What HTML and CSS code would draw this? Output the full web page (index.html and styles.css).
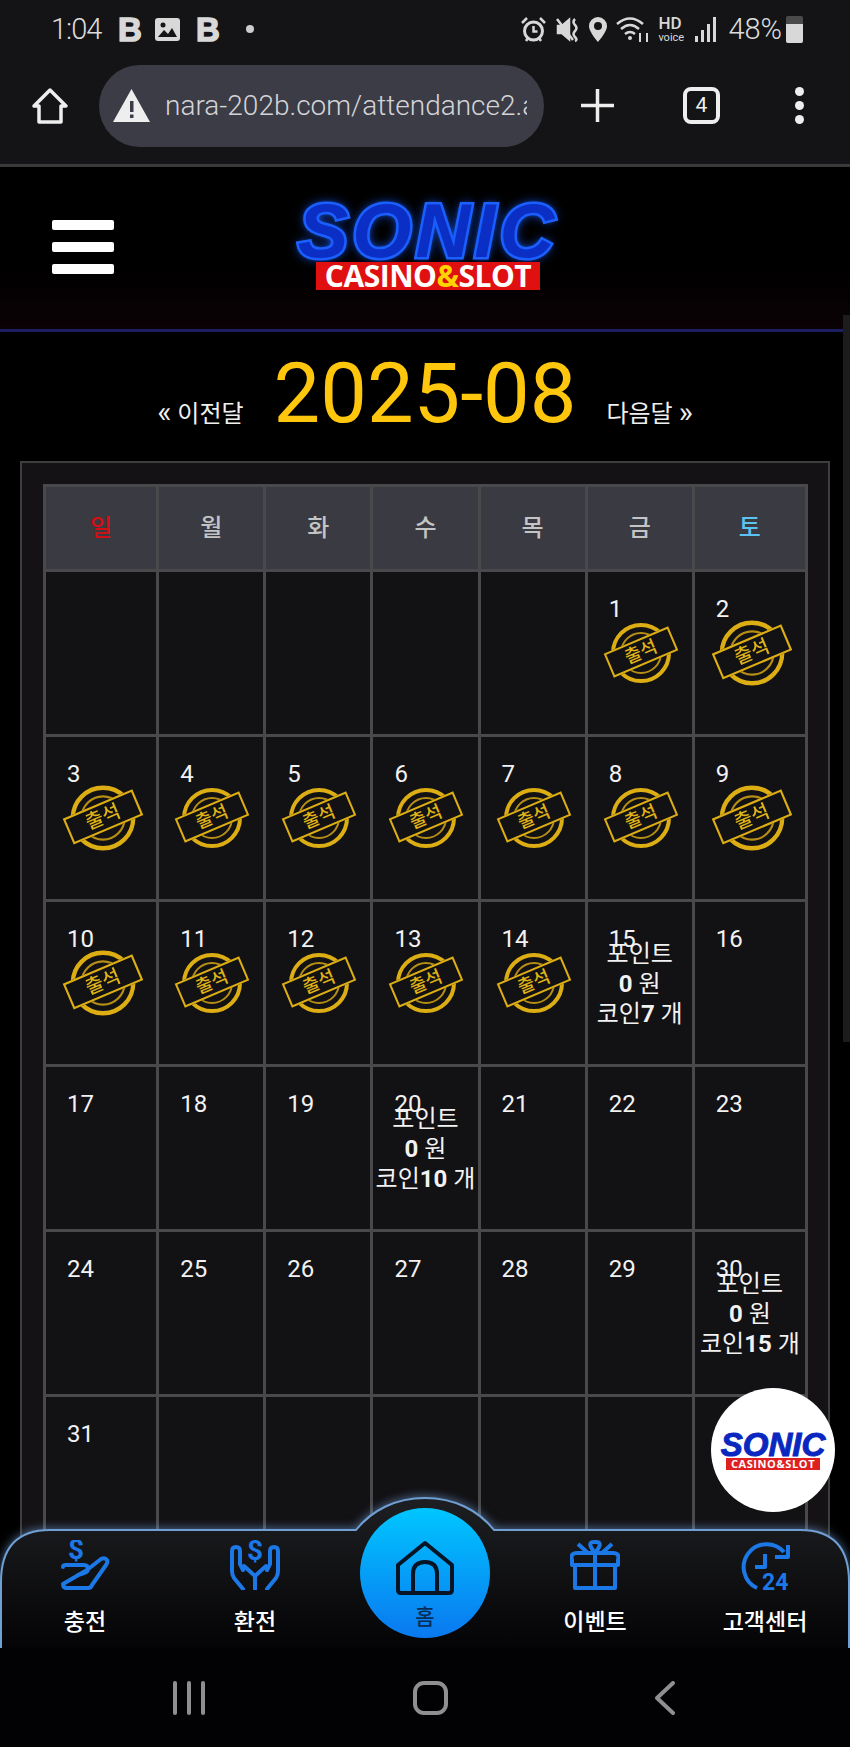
FILE: index.html
```html
<!DOCTYPE html>
<html lang="ko">
<head>
    <meta charset="UTF-8">
    <meta name="viewport" content="width=device-width, initial-scale=1.0">
    <title>출석체크</title>
    <link rel="stylesheet" href="styles.css">
</head>
<body>
<div class="screen">
    <!-- phone status bar -->
    <div class="status-bar">
        <div class="status-left">
            <span class="time">1:04</span>
            <span class="b-icon">B</span>
            <svg class="st-img" width="25" height="23" viewBox="0 0 25 23"><rect width="25" height="23" rx="3" fill="#d8d8d8"/><circle cx="8" cy="7" r="2.5" fill="#141416"/><path d="M3 19l6-7 4 4 4-6 5 9z" fill="#141416"/></svg>
            <span class="b-icon b-second">B</span>
            <span class="st-dot"></span>
        </div>
        <div class="status-right">
            <svg width="27" height="27" viewBox="0 0 27 27" fill="none" stroke="#d8d8d8"><circle cx="13.500" cy="15" r="9" stroke-width="3"/><path d="M13.500 10v5.500h4M2 7l5-5M25 7l-5-5M6 25l2-3M21 25l-2-3" stroke-width="2.500"/></svg>
            <svg width="24" height="27" viewBox="0 0 24 27" fill="none" stroke="#d8d8d8" stroke-width="2.500"><path d="M2 10h4l7-6v19l-7-6H2z" fill="#d8d8d8"/><path d="M19 3q-3 3 0 6t0 6 0 6 0 4M1 3l16 21"/></svg>
            <svg width="18" height="25" viewBox="0 0 18 25"><path fill-rule="evenodd" d="M9 0a9 9 0 0 1 9 9c0 6-9 16-9 16S0 15 0 9a9 9 0 0 1 9-9zm0 5a4 4 0 1 0 0 8 4 4 0 0 0 0-8z" fill="#d8d8d8"/></svg>
            <svg width="33" height="27" viewBox="0 0 33 27" fill="none" stroke="#d8d8d8" stroke-width="2.500"><path d="M1 8q13-11 26 0M5 13q9-8 18 0M9 18q5-4 10 0"/><circle cx="14" cy="22" r="2" fill="#d8d8d8" stroke="none"/><path d="M24 17v9M31 26v-9" stroke-width="2"/></svg>
            <span class="hd"><b>HD</b><i>voice</i></span>
            <svg width="22" height="25" viewBox="0 0 22 25" fill="#d8d8d8"><rect x="0" y="19" width="3" height="6"/><rect x="6" y="13" width="3" height="12"/><rect x="12" y="7" width="3" height="18"/><rect x="18" y="0" width="3" height="25"/></svg>
            <span class="battery-text">48%</span>
            <span class="battery"><span class="battery-fill"></span></span>
        </div>
    </div>

    <!-- browser toolbar -->
    <div class="toolbar">
        <svg class="tb-home" width="38" height="38" viewBox="0 0 38 38" fill="none" stroke="#eee" stroke-width="3.500" stroke-linejoin="round"><path d="M19 3L3 19h5v16h22V19h5z"/></svg>
        <div class="url-bar">
            <svg width="37" height="33" viewBox="0 0 37 33"><path fill-rule="evenodd" d="M18.500 0L37 33H0zM17 12v11h3.500V12zm0 13.500V29h3.500v-3.500z" fill="#eee"/></svg>
            <span class="url-text">nara-202b.com/attendance2.asp</span>
        </div>
        <svg class="tb-plus" width="33" height="33" viewBox="0 0 33 33" stroke="#eee" stroke-width="3.500"><path d="M16.500 0v33M0 16.500h33"/></svg>
        <span class="tab-count">4</span>
        <span class="tb-dots"><i></i><i></i><i></i></span>
    </div>

    <!-- site header -->
    <header class="site-header">
        <div class="hamburger"><span></span><span></span><span></span></div>
        <div class="logo">
            <div class="logo-name">SONIC</div>
            <div class="logo-band">CASINO<em>&amp;</em>SLOT</div>
        </div>
    </header>

    <div class="month-nav">
        <a class="month-link"><span class="month-arrow">«</span> 이전달</a>
        <span class="month-title">2025-08</span>
        <a class="month-link">다음달 <span class="month-arrow">»</span></a>
    </div>

    <div class="calendar-box">
        <table class="calendar">
            <thead>
                <tr>
                    <th class="wide sun">일</th>
                    <th>월</th>
                    <th>화</th>
                    <th>수</th>
                    <th>목</th>
                    <th>금</th>
                    <th class="wide sat">토</th>
                </tr>
            </thead>
            <tbody>
                <tr>
                    <td></td><td></td><td></td><td></td><td></td>
                    <td><div class="day">1</div><div class="stamp"><span>출석</span></div></td>
                    <td class="big"><div class="day">2</div><div class="stamp"><span>출석</span></div></td>
                </tr>
                <tr>
                    <td class="big"><div class="day">3</div><div class="stamp"><span>출석</span></div></td>
                    <td><div class="day">4</div><div class="stamp"><span>출석</span></div></td>
                    <td><div class="day">5</div><div class="stamp"><span>출석</span></div></td>
                    <td><div class="day">6</div><div class="stamp"><span>출석</span></div></td>
                    <td><div class="day">7</div><div class="stamp"><span>출석</span></div></td>
                    <td><div class="day">8</div><div class="stamp"><span>출석</span></div></td>
                    <td class="big"><div class="day">9</div><div class="stamp"><span>출석</span></div></td>
                </tr>
                <tr>
                    <td class="big"><div class="day">10</div><div class="stamp"><span>출석</span></div></td>
                    <td><div class="day">11</div><div class="stamp"><span>출석</span></div></td>
                    <td><div class="day">12</div><div class="stamp"><span>출석</span></div></td>
                    <td><div class="day">13</div><div class="stamp"><span>출석</span></div></td>
                    <td><div class="day">14</div><div class="stamp"><span>출석</span></div></td>
                    <td><div class="day has-prize">15</div><div class="prize">포인트<br><b>0</b> 원<br>코인<b>7</b> 개</div></td>
                    <td><div class="day">16</div></td>
                </tr>
                <tr>
                    <td><div class="day">17</div></td>
                    <td><div class="day">18</div></td>
                    <td><div class="day">19</div></td>
                    <td><div class="day has-prize">20</div><div class="prize">포인트<br><b>0</b> 원<br>코인<b>10</b> 개</div></td>
                    <td><div class="day">21</div></td>
                    <td><div class="day">22</div></td>
                    <td><div class="day">23</div></td>
                </tr>
                <tr>
                    <td><div class="day">24</div></td>
                    <td><div class="day">25</div></td>
                    <td><div class="day">26</div></td>
                    <td><div class="day">27</div></td>
                    <td><div class="day">28</div></td>
                    <td><div class="day">29</div></td>
                    <td><div class="day has-prize">30</div><div class="prize">포인트<br><b>0</b> 원<br>코인<b>15</b> 개</div></td>
                </tr>
                <tr>
                    <td><div class="day">31</div></td>
                    <td></td><td></td><td></td><td></td><td></td><td></td>
                </tr>
            </tbody>
        </table>
    </div>

    <div class="scrollbar"></div>

    <!-- floating logo button -->
    <div class="float-logo">
        <div class="float-name">SONIC</div>
        <div class="float-band">CASINO&amp;SLOT</div>
    </div>

    <!-- bottom dock -->
    <div class="dock">
        <nav class="bottom-nav">
            <svg class="nav-shape" width="850" height="154" viewBox="0 0 850 154">
                <defs>
                    <linearGradient id="navfill" x1="0" y1="0" x2="0" y2="1">
                        <stop offset="0" stop-color="#1e1f22"/>
                        <stop offset="1" stop-color="#040406"/>
                    </linearGradient>
                </defs>
                <path d="M1 154V88Q1 36 50 36H356C372 16 396 4 425 4S478 16 494 36H800Q849 36 849 88V154" fill="url(#navfill)" stroke="#6f9fd4" stroke-width="2"/>
            </svg>
            <a class="nav-item">
                <svg width="50" height="50" viewBox="0 0 50 50" fill="none" stroke="#1c78e6" stroke-width="4" stroke-linecap="round" stroke-linejoin="round"><path d="M3 27Q3 25 6 25H24Q28 25 28 29Q28 32 24 33L18 35M27 30L41 19Q45 17 47 20Q48 22 46 25L32 45Q31 48 28 48H7Q3 48 3 44Z"/><text class="nav-dollar" x="8" y="19">$</text></svg>
                <span>충전</span>
            </a>
            <a class="nav-item">
                <svg width="50" height="50" viewBox="0 0 50 50" fill="none" stroke="#1c78e6" stroke-width="4" stroke-linecap="round" stroke-linejoin="round"><path d="M13 49L4 38Q2 35 2 31V11Q2 7 6 7Q10 7 10 11V24L13 30"/><path d="M37 49L46 38Q48 35 48 31V11Q48 7 44 7Q40 7 40 11V24L37 30"/><path d="M25 49V36L14 26M25 36L36 26"/><text class="nav-dollar" x="25" y="20" text-anchor="middle">$</text></svg>
                <span>환전</span>
            </a>
            <a class="nav-item nav-home">
                <svg width="60" height="56" viewBox="0 0 60 56" fill="none" stroke="#061426" stroke-width="4" stroke-linejoin="round"><path d="M30 3L3 25V50Q3 53 6 53H54Q57 53 57 50V25Z"/><path d="M18 53V34Q18 22 30 22Q42 22 42 34V53"/></svg>
                <span>홈</span>
            </a>
            <a class="nav-item">
                <svg width="50" height="50" viewBox="0 0 50 50" fill="none" stroke="#1c78e6" stroke-width="4" stroke-linejoin="round"><path d="M7 13Q0 13 2 20V25H48V20Q50 13 43 13ZM5 25V48H45V25M25 13V48"/><path d="M25 13Q16 2 24 2H26Q34 2 25 13ZM8 4L18 13M42 4L32 13"/></svg>
                <span>이벤트</span>
            </a>
            <a class="nav-item">
                <svg width="50" height="50" viewBox="0 0 50 50" fill="none" stroke="#1c78e6" stroke-width="4" stroke-linejoin="round"><path d="M44 12A23 23 0 1 0 17 48"/><path d="M48 5V17H35M25 14V27H15"/><text class="nav-24" x="22" y="50">24</text></svg>
                <span>고객센터</span>
            </a>
        </nav>
        <div class="sys-nav">
            <svg width="32" height="34" viewBox="0 0 32 34" fill="#8f8f91"><rect x="0" width="4" height="34" rx="2"/><rect x="14" width="4" height="34" rx="2"/><rect x="28" width="4" height="34" rx="2"/></svg>
            <span class="sys-home"></span>
            <svg width="20" height="34" viewBox="0 0 20 34" fill="none" stroke="#8f8f91" stroke-width="4" stroke-linecap="round" stroke-linejoin="round"><path d="M18 2L2 17l16 15"/></svg>
        </div>
    </div>
</div>
</body>
</html>
```

FILE: styles.css
```css
* {
    box-sizing: border-box;
}
body {
    margin: 0;
    background-color: #000;
    color: #fff;
    font-family: Roboto, "Noto Sans CJK KR", sans-serif;
}
.screen {
    position: relative;
    width: 850px;
    height: 1747px;
    overflow: hidden;
    background-color: #000;
}

/* status bar */
.status-bar {
    height: 50px;
    padding: 8px 47px 0 51px;
    background-color: #141416;
    display: flex;
    justify-content: space-between;
    align-items: center;
}
.status-left,
.status-right {
    display: flex;
    align-items: center;
}
.status-left {
    gap: 16px;
}
.status-right {
    gap: 9px;
}
.time {
    font-size: 29px;
    font-weight: 300;
    letter-spacing: -1px;
    color: #ddd;
    width: 51px;
}
.b-icon {
    width: 21px;
    font: bold 33px/1 "Liberation Sans", sans-serif;
    color: #d8d8d8;
    -webkit-text-stroke: 1.5px #d8d8d8;
}
.b-second {
    margin-right: 13px;
}
.st-dot {
    width: 8px;
    height: 8px;
    border-radius: 50%;
    background-color: #ccc;
}
.hd {
    display: flex;
    flex-direction: column;
    line-height: 1;
    color: #d8d8d8;
    width: 28px;
}
.hd b {
    font-size: 17px;
    font-weight: 500;
}
.hd i {
    font-size: 11px;
    font-style: normal;
}
.battery-text {
    font-size: 29px;
    font-weight: 300;
    color: #ddd;
    margin-left: 2px;
}
.battery {
    display: block;
    width: 17px;
    height: 27px;
    margin-left: -5px;
    background-color: #4a4a4a;
    border-radius: 2px;
    position: relative;
}
.battery-fill {
    display: block;
    position: absolute;
    left: 0;
    right: 0;
    bottom: 0;
    height: 19px;
    background-color: #d8d8d8;
    border-radius: 0 0 2px 2px;
}

/* browser toolbar */
.toolbar {
    height: 117px;
    padding: 16px 0 19px 0;
    background-color: #141416;
    border-bottom: 3px solid #3a3a3a;
    display: flex;
    align-items: center;
}
.tb-home {
    margin-left: 31px;
}
.url-bar {
    width: 445px;
    height: 82px;
    margin-left: 30px;
    padding-left: 14px;
    border-radius: 41px;
    background-color: #3b3c46;
    display: flex;
    align-items: center;
    gap: 15px;
    overflow: hidden;
}
.url-bar svg {
    flex-shrink: 0;
}
.url-text {
    width: 362px;
    overflow: hidden;
    white-space: nowrap;
    font-size: 28px;
    font-weight: 300;
    color: #d4d4d8;
}
.tb-plus {
    margin-left: 37px;
}
.tab-count {
    width: 37px;
    height: 37px;
    margin-left: 69px;
    border: 4px solid #eee;
    border-radius: 8px;
    font-size: 21px;
    line-height: 28px;
    text-align: center;
    color: #eee;
}
.tb-dots {
    margin-left: 75px;
    display: flex;
    flex-direction: column;
    gap: 5px;
}
.tb-dots i {
    display: block;
    width: 9px;
    height: 9px;
    border-radius: 50%;
    background-color: #eee;
}

/* site header */
.site-header {
    height: 165px;
    padding: 33px 0 0 52px;
    background: linear-gradient(#000 60%, #0a0205);
    border-bottom: 3px solid #1d1d62;
    display: flex;
    align-items: flex-start;
}
.hamburger {
    width: 62px;
    margin-top: 20px;
    display: flex;
    flex-direction: column;
    gap: 12px;
}
.hamburger span {
    height: 10px;
    border-radius: 2px;
    background-color: #fff;
}
.logo {
    margin-left: 182px;
    width: 264px;
    display: flex;
    flex-direction: column;
    align-items: center;
}
.logo-name {
    font: italic bold 76px/62px "Liberation Sans", sans-serif;
    letter-spacing: 4px;
    color: #0b2fc4;
    -webkit-text-stroke: 5px #1f66ff;
    paint-order: stroke fill;
    text-shadow: 0 0 12px #1a5cff, 0 0 5px #1a5cff;
}
.logo-band {
    width: 224px;
    height: 28px;
    background-color: #e01010;
    font: bold 30px/28px "Open Sans", sans-serif;
    letter-spacing: -0.5px;
    text-align: center;
    white-space: nowrap;
    color: #fff;
}
.logo-band em {
    font-style: normal;
    color: #ffd200;
}

/* month header */
.month-nav {
    height: 129px;
    padding-bottom: 20px;
    display: flex;
    justify-content: center;
    align-items: flex-end;
    gap: 30px;
}
.month-title {
    font-size: 83px;
    line-height: 95px;
    color: #ffc60e;
}
.month-link {
    margin-bottom: 5px;
    font-size: 24px;
    line-height: 44px;
    color: #f0f0f0;
    white-space: nowrap;
}
.month-arrow {
    font-size: 30px;
    line-height: 20px;
}

/* calendar */
.calendar-box {
    width: 810px;
    height: 1130px;
    margin-left: 20px;
    padding: 21px 21px 0 21px;
    background-color: #141214;
    border: 2px solid #3e3e40;
}
.calendar {
    width: 765px;
    table-layout: fixed;
    border-collapse: collapse;
}
.calendar th,
.calendar td {
    border: 3px solid #49494b;
}
.calendar th {
    height: 85px;
    padding-bottom: 6px;
    background-color: #3a3a42;
    font-size: 24px;
    font-weight: 500;
    color: #c4c4c4;
    width: 107px;
}
.calendar th.wide {
    width: 113px;
}
.calendar th.sun {
    color: #d40f14;
}
.calendar th.sat {
    color: #5cc2f0;
}
.calendar td {
    height: 165px;
    padding: 23px 0 0 21px;
    background-color: #121114;
    vertical-align: top;
}
.day {
    font-size: 24px;
    line-height: 28px;
    color: #f2f2f2;
}
.has-prize {
    margin-bottom: -14px;
}
.prize {
    margin-left: -21px;
    text-align: center;
    font-size: 24px;
    line-height: 30px;
    white-space: nowrap;
    color: #f2f2f2;
}
.prize b {
    font-weight: 700;
}

/* 출석 stamp */
.stamp {
    position: relative;
    width: 60px;
    height: 60px;
    margin: 0 0 0 2px;
    border: 4px solid #dcae14;
    border-radius: 50%;
}
.stamp::before {
    content: "";
    position: absolute;
    inset: 5px;
    border: 2px solid #b68e14;
    border-radius: 50%;
}
.stamp span {
    position: absolute;
    left: -9px;
    top: 12px;
    width: 70px;
    height: 26px;
    border: 2px solid #dcae14;
    background-color: #121114;
    transform: rotate(-23deg);
    font-size: 18px;
    font-weight: 500;
    line-height: 21px;
    text-align: center;
    color: #e0b416;
}
.big .stamp {
    transform: scale(1.08);
    margin-left: 6px;
}

/* scrollbar strip on the right */
.scrollbar {
    position: absolute;
    top: 315px;
    right: 0;
    width: 7px;
    height: 727px;
    background-color: #1c1c1e;
}

/* floating logo */
.float-logo {
    position: absolute;
    left: 711px;
    top: 1388px;
    width: 124px;
    height: 124px;
    padding-top: 43px;
    border-radius: 50%;
    background-color: #fff;
    display: flex;
    flex-direction: column;
    align-items: center;
    z-index: 2;
}
.float-name {
    font: italic bold 33px/27px "Liberation Sans", sans-serif;
    color: #0a28c0;
    -webkit-text-stroke: 1px #0a28c0;
}
.float-band {
    width: 94px;
    height: 12px;
    background-color: #e02020;
    font: bold 11px/12px "Open Sans", sans-serif;
    letter-spacing: 0.6px;
    text-align: center;
    white-space: nowrap;
    color: #fff;
}

/* bottom dock */
.dock {
    position: absolute;
    left: 0;
    right: 0;
    bottom: 0;
    z-index: 3;
}
.bottom-nav {
    position: relative;
    height: 154px;
    padding-top: 46px;
    display: grid;
    grid-template-columns: repeat(5, 170px);
}
.nav-shape {
    position: absolute;
    left: 0;
    top: 0;
    filter: drop-shadow(0 -1px 5px rgba(120, 170, 230, 0.55));
}
.nav-item {
    position: relative;
    display: flex;
    flex-direction: column;
    align-items: center;
    font-size: 23px;
    font-weight: 500;
    line-height: 30px;
    color: #fff;
}
.nav-item span {
    margin-top: 18px;
}
.nav-dollar {
    font-family: Roboto, sans-serif;
    font-size: 28px;
    font-weight: 700;
    fill: #1c78e6;
    stroke: none;
}
.nav-24 {
    font-family: Roboto, sans-serif;
    font-size: 23px;
    font-weight: 700;
    fill: #1c78e6;
    stroke: none;
}
.nav-item.nav-home {
    width: 130px;
    height: 130px;
    margin: -32px 0 0 20px;
    padding-top: 32px;
    border-radius: 50%;
    background: linear-gradient(#00c6ff, #0a78f0);
    color: #082c58;
    font-size: 21px;
    line-height: 26px;
}
.nav-item.nav-home span {
    margin-top: 8px;
}
.sys-nav {
    height: 99px;
    background-color: #020204;
    position: relative;
    padding: 33px 175px 0 173px;
    display: flex;
    justify-content: space-between;
    align-items: flex-start;
}
.sys-home {
    width: 35px;
    height: 34px;
    border: 4px solid #8f8f91;
    border-radius: 11px;
}
```
